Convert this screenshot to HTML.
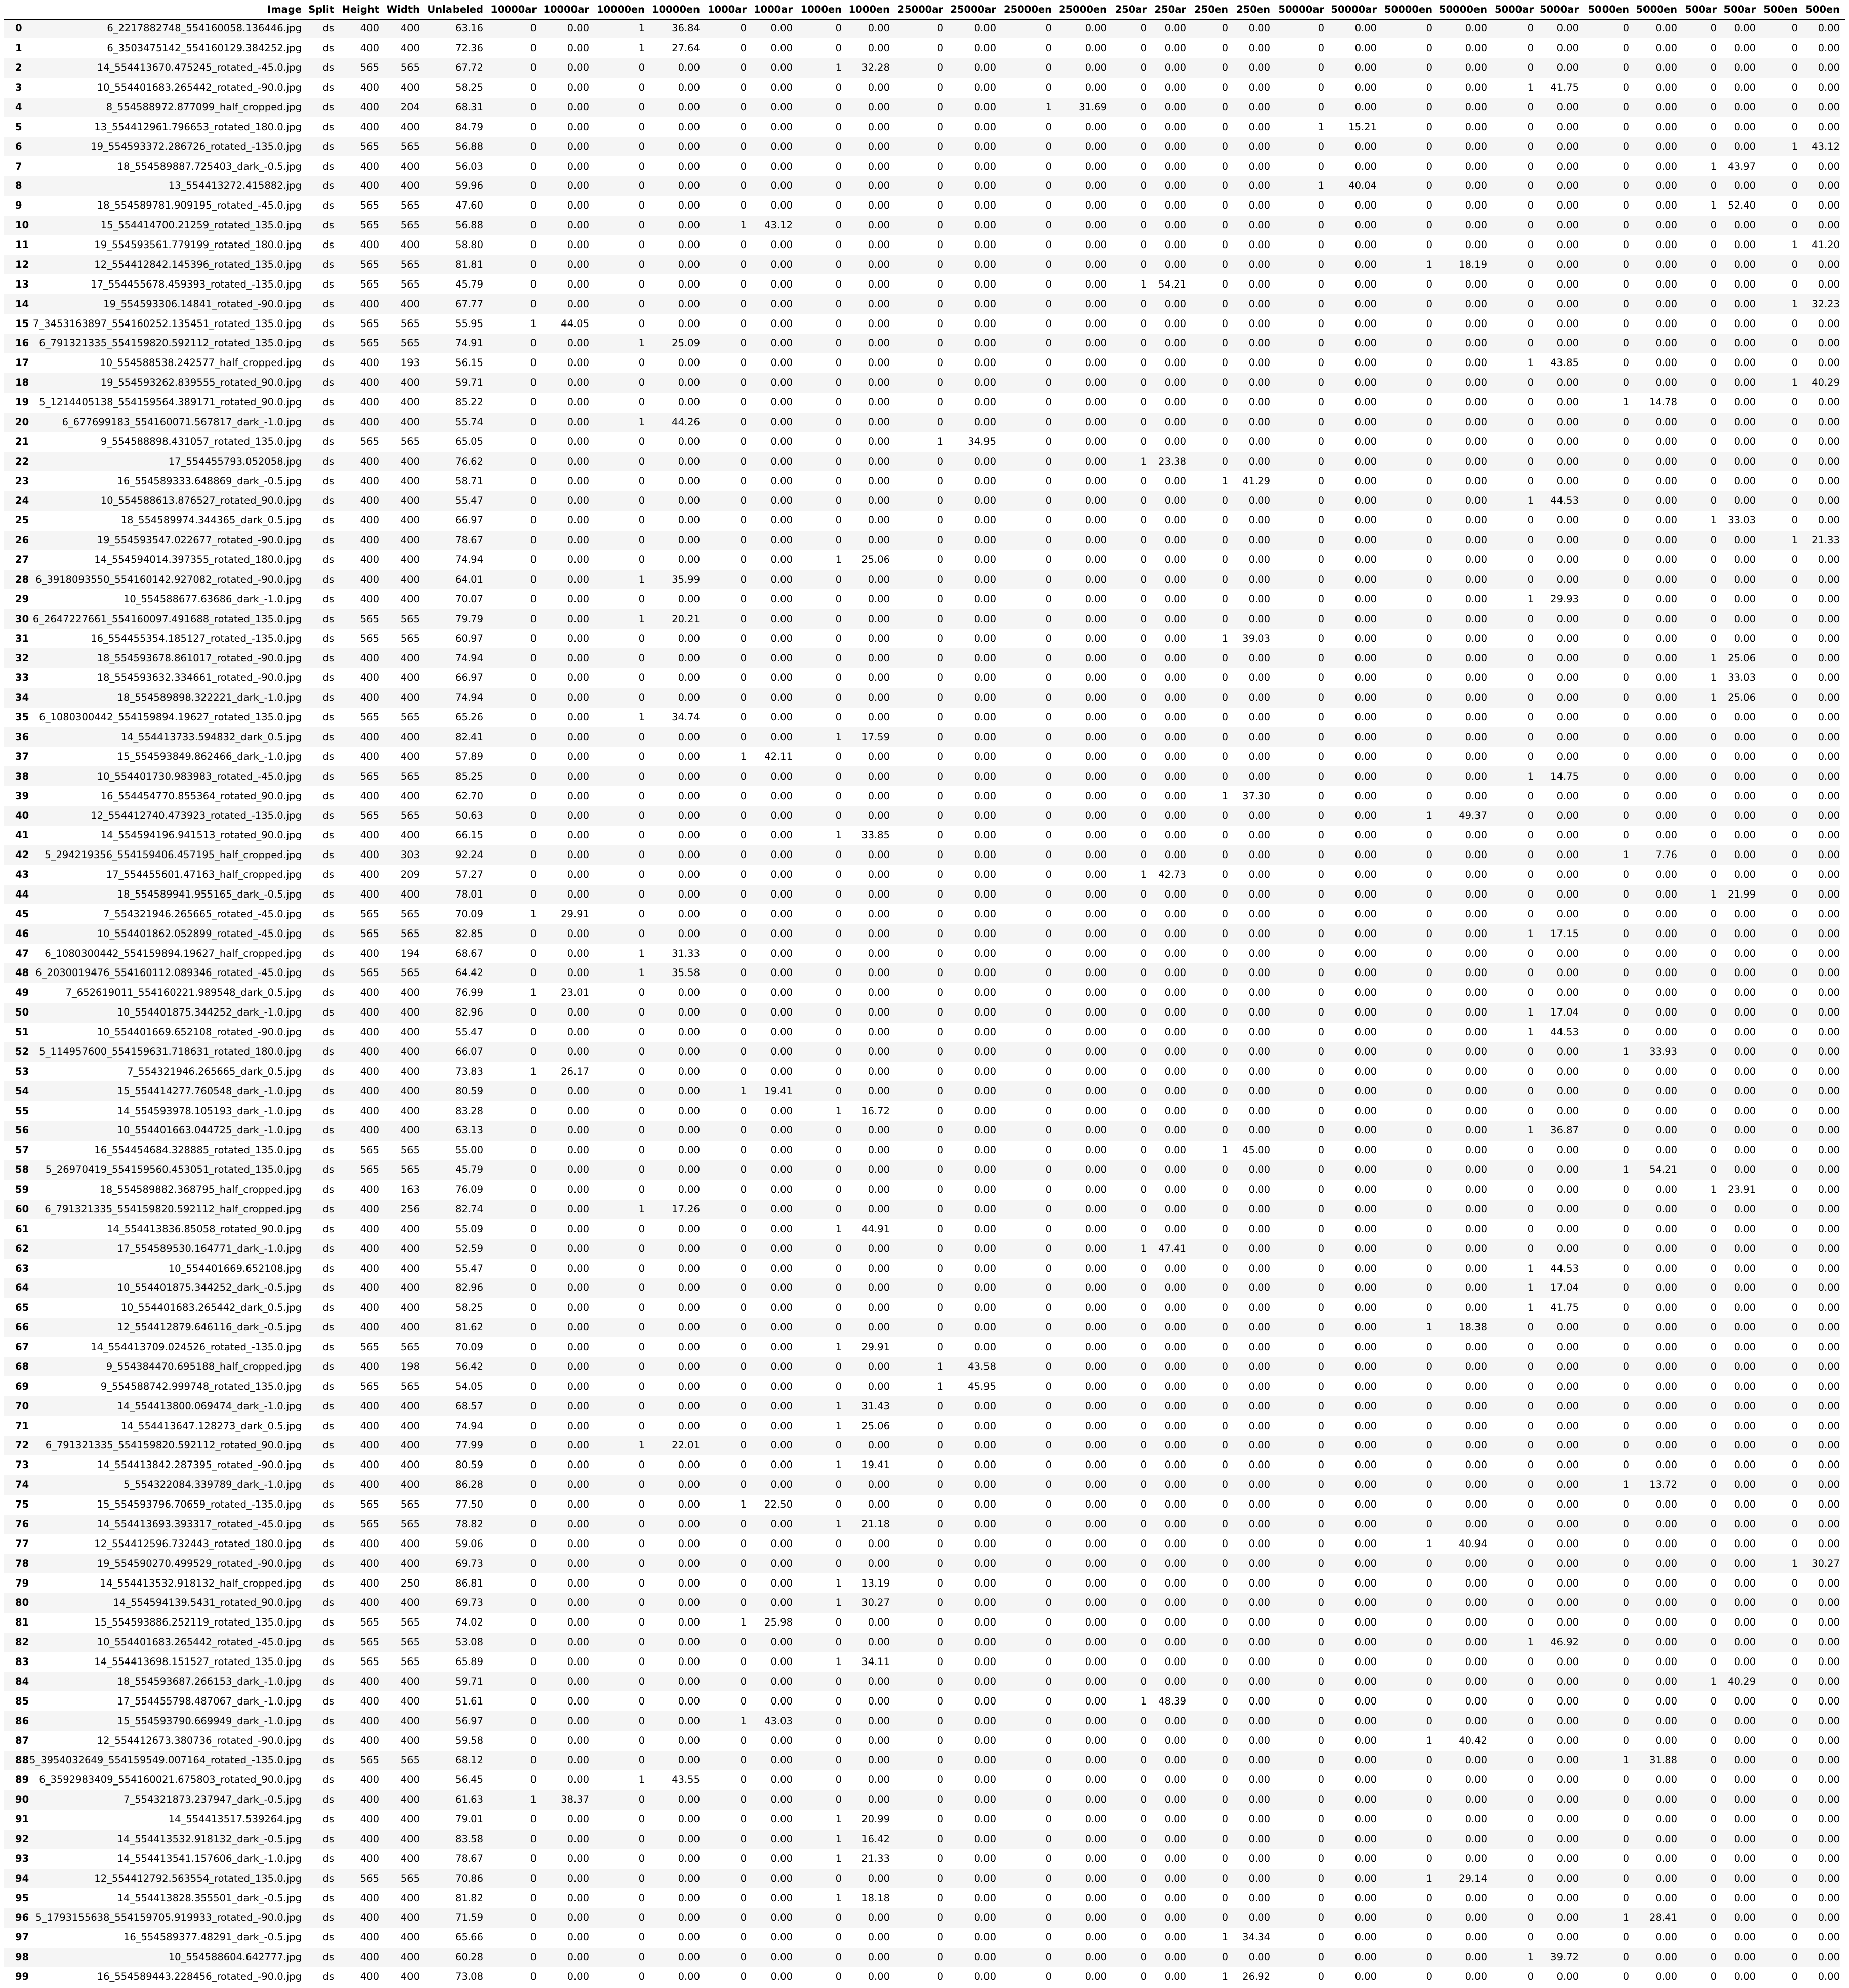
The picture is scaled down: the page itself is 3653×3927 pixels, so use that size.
<!DOCTYPE html>
<html><head><meta charset="utf-8"><style>
html,body{margin:0;padding:0;background:#fff;width:3653px;height:3927px;overflow:hidden}
table{position:absolute;left:8px;top:0;border-collapse:collapse;table-layout:fixed;width:3627px;font-family:"DejaVu Sans","Liberation Sans",sans-serif;font-size:19.5px;color:#000}
td,th{padding:0;text-align:right;white-space:nowrap;vertical-align:middle;height:38.75px;line-height:20px;overflow:visible}
tbody tr:nth-child(even) td,tbody tr:nth-child(even) th{height:39px}
thead th{height:37px;font-weight:bold}
tbody th{text-align:left;padding-left:22px;font-weight:bold}
tbody tr:nth-child(odd){background:#f5f5f5}
#ln{position:absolute;left:8px;top:37px;width:3637px;height:2px;background:#000}
</style></head><body>
<table>
<colgroup><col style="width:50px"><col style="width:538px"><col style="width:64px"><col style="width:89px"><col style="width:80px"><col style="width:126px"><col style="width:105px"><col style="width:104px"><col style="width:110px"><col style="width:109px"><col style="width:92px"><col style="width:91px"><col style="width:97px"><col style="width:95px"><col style="width:106px"><col style="width:104px"><col style="width:110px"><col style="width:109px"><col style="width:79px"><col style="width:78px"><col style="width:83px"><col style="width:83px"><col style="width:106px"><col style="width:104px"><col style="width:110px"><col style="width:108px"><col style="width:92px"><col style="width:89px"><col style="width:100px"><col style="width:95px"><col style="width:78px"><col style="width:77px"><col style="width:83px"><col style="width:83px"></colgroup>
<thead><tr><th></th><th>Image</th><th>Split</th><th>Height</th><th>Width</th><th>Unlabeled</th><th>10000ar</th><th>10000ar</th><th>10000en</th><th>10000en</th><th>1000ar</th><th>1000ar</th><th>1000en</th><th>1000en</th><th>25000ar</th><th>25000ar</th><th>25000en</th><th>25000en</th><th>250ar</th><th>250ar</th><th>250en</th><th>250en</th><th>50000ar</th><th>50000ar</th><th>50000en</th><th>50000en</th><th>5000ar</th><th>5000ar</th><th>5000en</th><th>5000en</th><th>500ar</th><th>500ar</th><th>500en</th><th>500en</th></tr></thead>
<tbody>
<tr><th>0<td>6_2217882748_554160058.136446.jpg<td>ds<td>400<td>400<td>63.16<td>0<td>0.00<td>1<td>36.84<td>0<td>0.00<td>0<td>0.00<td>0<td>0.00<td>0<td>0.00<td>0<td>0.00<td>0<td>0.00<td>0<td>0.00<td>0<td>0.00<td>0<td>0.00<td>0<td>0.00<td>0<td>0.00<td>0<td>0.00
<tr><th>1<td>6_3503475142_554160129.384252.jpg<td>ds<td>400<td>400<td>72.36<td>0<td>0.00<td>1<td>27.64<td>0<td>0.00<td>0<td>0.00<td>0<td>0.00<td>0<td>0.00<td>0<td>0.00<td>0<td>0.00<td>0<td>0.00<td>0<td>0.00<td>0<td>0.00<td>0<td>0.00<td>0<td>0.00<td>0<td>0.00
<tr><th>2<td>14_554413670.475245_rotated_-45.0.jpg<td>ds<td>565<td>565<td>67.72<td>0<td>0.00<td>0<td>0.00<td>0<td>0.00<td>1<td>32.28<td>0<td>0.00<td>0<td>0.00<td>0<td>0.00<td>0<td>0.00<td>0<td>0.00<td>0<td>0.00<td>0<td>0.00<td>0<td>0.00<td>0<td>0.00<td>0<td>0.00
<tr><th>3<td>10_554401683.265442_rotated_-90.0.jpg<td>ds<td>400<td>400<td>58.25<td>0<td>0.00<td>0<td>0.00<td>0<td>0.00<td>0<td>0.00<td>0<td>0.00<td>0<td>0.00<td>0<td>0.00<td>0<td>0.00<td>0<td>0.00<td>0<td>0.00<td>1<td>41.75<td>0<td>0.00<td>0<td>0.00<td>0<td>0.00
<tr><th>4<td>8_554588972.877099_half_cropped.jpg<td>ds<td>400<td>204<td>68.31<td>0<td>0.00<td>0<td>0.00<td>0<td>0.00<td>0<td>0.00<td>0<td>0.00<td>1<td>31.69<td>0<td>0.00<td>0<td>0.00<td>0<td>0.00<td>0<td>0.00<td>0<td>0.00<td>0<td>0.00<td>0<td>0.00<td>0<td>0.00
<tr><th>5<td>13_554412961.796653_rotated_180.0.jpg<td>ds<td>400<td>400<td>84.79<td>0<td>0.00<td>0<td>0.00<td>0<td>0.00<td>0<td>0.00<td>0<td>0.00<td>0<td>0.00<td>0<td>0.00<td>0<td>0.00<td>1<td>15.21<td>0<td>0.00<td>0<td>0.00<td>0<td>0.00<td>0<td>0.00<td>0<td>0.00
<tr><th>6<td>19_554593372.286726_rotated_-135.0.jpg<td>ds<td>565<td>565<td>56.88<td>0<td>0.00<td>0<td>0.00<td>0<td>0.00<td>0<td>0.00<td>0<td>0.00<td>0<td>0.00<td>0<td>0.00<td>0<td>0.00<td>0<td>0.00<td>0<td>0.00<td>0<td>0.00<td>0<td>0.00<td>0<td>0.00<td>1<td>43.12
<tr><th>7<td>18_554589887.725403_dark_-0.5.jpg<td>ds<td>400<td>400<td>56.03<td>0<td>0.00<td>0<td>0.00<td>0<td>0.00<td>0<td>0.00<td>0<td>0.00<td>0<td>0.00<td>0<td>0.00<td>0<td>0.00<td>0<td>0.00<td>0<td>0.00<td>0<td>0.00<td>0<td>0.00<td>1<td>43.97<td>0<td>0.00
<tr><th>8<td>13_554413272.415882.jpg<td>ds<td>400<td>400<td>59.96<td>0<td>0.00<td>0<td>0.00<td>0<td>0.00<td>0<td>0.00<td>0<td>0.00<td>0<td>0.00<td>0<td>0.00<td>0<td>0.00<td>1<td>40.04<td>0<td>0.00<td>0<td>0.00<td>0<td>0.00<td>0<td>0.00<td>0<td>0.00
<tr><th>9<td>18_554589781.909195_rotated_-45.0.jpg<td>ds<td>565<td>565<td>47.60<td>0<td>0.00<td>0<td>0.00<td>0<td>0.00<td>0<td>0.00<td>0<td>0.00<td>0<td>0.00<td>0<td>0.00<td>0<td>0.00<td>0<td>0.00<td>0<td>0.00<td>0<td>0.00<td>0<td>0.00<td>1<td>52.40<td>0<td>0.00
<tr><th>10<td>15_554414700.21259_rotated_135.0.jpg<td>ds<td>565<td>565<td>56.88<td>0<td>0.00<td>0<td>0.00<td>1<td>43.12<td>0<td>0.00<td>0<td>0.00<td>0<td>0.00<td>0<td>0.00<td>0<td>0.00<td>0<td>0.00<td>0<td>0.00<td>0<td>0.00<td>0<td>0.00<td>0<td>0.00<td>0<td>0.00
<tr><th>11<td>19_554593561.779199_rotated_180.0.jpg<td>ds<td>400<td>400<td>58.80<td>0<td>0.00<td>0<td>0.00<td>0<td>0.00<td>0<td>0.00<td>0<td>0.00<td>0<td>0.00<td>0<td>0.00<td>0<td>0.00<td>0<td>0.00<td>0<td>0.00<td>0<td>0.00<td>0<td>0.00<td>0<td>0.00<td>1<td>41.20
<tr><th>12<td>12_554412842.145396_rotated_135.0.jpg<td>ds<td>565<td>565<td>81.81<td>0<td>0.00<td>0<td>0.00<td>0<td>0.00<td>0<td>0.00<td>0<td>0.00<td>0<td>0.00<td>0<td>0.00<td>0<td>0.00<td>0<td>0.00<td>1<td>18.19<td>0<td>0.00<td>0<td>0.00<td>0<td>0.00<td>0<td>0.00
<tr><th>13<td>17_554455678.459393_rotated_-135.0.jpg<td>ds<td>565<td>565<td>45.79<td>0<td>0.00<td>0<td>0.00<td>0<td>0.00<td>0<td>0.00<td>0<td>0.00<td>0<td>0.00<td>1<td>54.21<td>0<td>0.00<td>0<td>0.00<td>0<td>0.00<td>0<td>0.00<td>0<td>0.00<td>0<td>0.00<td>0<td>0.00
<tr><th>14<td>19_554593306.14841_rotated_-90.0.jpg<td>ds<td>400<td>400<td>67.77<td>0<td>0.00<td>0<td>0.00<td>0<td>0.00<td>0<td>0.00<td>0<td>0.00<td>0<td>0.00<td>0<td>0.00<td>0<td>0.00<td>0<td>0.00<td>0<td>0.00<td>0<td>0.00<td>0<td>0.00<td>0<td>0.00<td>1<td>32.23
<tr><th>15<td>7_3453163897_554160252.135451_rotated_135.0.jpg<td>ds<td>565<td>565<td>55.95<td>1<td>44.05<td>0<td>0.00<td>0<td>0.00<td>0<td>0.00<td>0<td>0.00<td>0<td>0.00<td>0<td>0.00<td>0<td>0.00<td>0<td>0.00<td>0<td>0.00<td>0<td>0.00<td>0<td>0.00<td>0<td>0.00<td>0<td>0.00
<tr><th>16<td>6_791321335_554159820.592112_rotated_135.0.jpg<td>ds<td>565<td>565<td>74.91<td>0<td>0.00<td>1<td>25.09<td>0<td>0.00<td>0<td>0.00<td>0<td>0.00<td>0<td>0.00<td>0<td>0.00<td>0<td>0.00<td>0<td>0.00<td>0<td>0.00<td>0<td>0.00<td>0<td>0.00<td>0<td>0.00<td>0<td>0.00
<tr><th>17<td>10_554588538.242577_half_cropped.jpg<td>ds<td>400<td>193<td>56.15<td>0<td>0.00<td>0<td>0.00<td>0<td>0.00<td>0<td>0.00<td>0<td>0.00<td>0<td>0.00<td>0<td>0.00<td>0<td>0.00<td>0<td>0.00<td>0<td>0.00<td>1<td>43.85<td>0<td>0.00<td>0<td>0.00<td>0<td>0.00
<tr><th>18<td>19_554593262.839555_rotated_90.0.jpg<td>ds<td>400<td>400<td>59.71<td>0<td>0.00<td>0<td>0.00<td>0<td>0.00<td>0<td>0.00<td>0<td>0.00<td>0<td>0.00<td>0<td>0.00<td>0<td>0.00<td>0<td>0.00<td>0<td>0.00<td>0<td>0.00<td>0<td>0.00<td>0<td>0.00<td>1<td>40.29
<tr><th>19<td>5_1214405138_554159564.389171_rotated_90.0.jpg<td>ds<td>400<td>400<td>85.22<td>0<td>0.00<td>0<td>0.00<td>0<td>0.00<td>0<td>0.00<td>0<td>0.00<td>0<td>0.00<td>0<td>0.00<td>0<td>0.00<td>0<td>0.00<td>0<td>0.00<td>0<td>0.00<td>1<td>14.78<td>0<td>0.00<td>0<td>0.00
<tr><th>20<td>6_677699183_554160071.567817_dark_-1.0.jpg<td>ds<td>400<td>400<td>55.74<td>0<td>0.00<td>1<td>44.26<td>0<td>0.00<td>0<td>0.00<td>0<td>0.00<td>0<td>0.00<td>0<td>0.00<td>0<td>0.00<td>0<td>0.00<td>0<td>0.00<td>0<td>0.00<td>0<td>0.00<td>0<td>0.00<td>0<td>0.00
<tr><th>21<td>9_554588898.431057_rotated_135.0.jpg<td>ds<td>565<td>565<td>65.05<td>0<td>0.00<td>0<td>0.00<td>0<td>0.00<td>0<td>0.00<td>1<td>34.95<td>0<td>0.00<td>0<td>0.00<td>0<td>0.00<td>0<td>0.00<td>0<td>0.00<td>0<td>0.00<td>0<td>0.00<td>0<td>0.00<td>0<td>0.00
<tr><th>22<td>17_554455793.052058.jpg<td>ds<td>400<td>400<td>76.62<td>0<td>0.00<td>0<td>0.00<td>0<td>0.00<td>0<td>0.00<td>0<td>0.00<td>0<td>0.00<td>1<td>23.38<td>0<td>0.00<td>0<td>0.00<td>0<td>0.00<td>0<td>0.00<td>0<td>0.00<td>0<td>0.00<td>0<td>0.00
<tr><th>23<td>16_554589333.648869_dark_-0.5.jpg<td>ds<td>400<td>400<td>58.71<td>0<td>0.00<td>0<td>0.00<td>0<td>0.00<td>0<td>0.00<td>0<td>0.00<td>0<td>0.00<td>0<td>0.00<td>1<td>41.29<td>0<td>0.00<td>0<td>0.00<td>0<td>0.00<td>0<td>0.00<td>0<td>0.00<td>0<td>0.00
<tr><th>24<td>10_554588613.876527_rotated_90.0.jpg<td>ds<td>400<td>400<td>55.47<td>0<td>0.00<td>0<td>0.00<td>0<td>0.00<td>0<td>0.00<td>0<td>0.00<td>0<td>0.00<td>0<td>0.00<td>0<td>0.00<td>0<td>0.00<td>0<td>0.00<td>1<td>44.53<td>0<td>0.00<td>0<td>0.00<td>0<td>0.00
<tr><th>25<td>18_554589974.344365_dark_0.5.jpg<td>ds<td>400<td>400<td>66.97<td>0<td>0.00<td>0<td>0.00<td>0<td>0.00<td>0<td>0.00<td>0<td>0.00<td>0<td>0.00<td>0<td>0.00<td>0<td>0.00<td>0<td>0.00<td>0<td>0.00<td>0<td>0.00<td>0<td>0.00<td>1<td>33.03<td>0<td>0.00
<tr><th>26<td>19_554593547.022677_rotated_-90.0.jpg<td>ds<td>400<td>400<td>78.67<td>0<td>0.00<td>0<td>0.00<td>0<td>0.00<td>0<td>0.00<td>0<td>0.00<td>0<td>0.00<td>0<td>0.00<td>0<td>0.00<td>0<td>0.00<td>0<td>0.00<td>0<td>0.00<td>0<td>0.00<td>0<td>0.00<td>1<td>21.33
<tr><th>27<td>14_554594014.397355_rotated_180.0.jpg<td>ds<td>400<td>400<td>74.94<td>0<td>0.00<td>0<td>0.00<td>0<td>0.00<td>1<td>25.06<td>0<td>0.00<td>0<td>0.00<td>0<td>0.00<td>0<td>0.00<td>0<td>0.00<td>0<td>0.00<td>0<td>0.00<td>0<td>0.00<td>0<td>0.00<td>0<td>0.00
<tr><th>28<td>6_3918093550_554160142.927082_rotated_-90.0.jpg<td>ds<td>400<td>400<td>64.01<td>0<td>0.00<td>1<td>35.99<td>0<td>0.00<td>0<td>0.00<td>0<td>0.00<td>0<td>0.00<td>0<td>0.00<td>0<td>0.00<td>0<td>0.00<td>0<td>0.00<td>0<td>0.00<td>0<td>0.00<td>0<td>0.00<td>0<td>0.00
<tr><th>29<td>10_554588677.63686_dark_-1.0.jpg<td>ds<td>400<td>400<td>70.07<td>0<td>0.00<td>0<td>0.00<td>0<td>0.00<td>0<td>0.00<td>0<td>0.00<td>0<td>0.00<td>0<td>0.00<td>0<td>0.00<td>0<td>0.00<td>0<td>0.00<td>1<td>29.93<td>0<td>0.00<td>0<td>0.00<td>0<td>0.00
<tr><th>30<td>6_2647227661_554160097.491688_rotated_135.0.jpg<td>ds<td>565<td>565<td>79.79<td>0<td>0.00<td>1<td>20.21<td>0<td>0.00<td>0<td>0.00<td>0<td>0.00<td>0<td>0.00<td>0<td>0.00<td>0<td>0.00<td>0<td>0.00<td>0<td>0.00<td>0<td>0.00<td>0<td>0.00<td>0<td>0.00<td>0<td>0.00
<tr><th>31<td>16_554455354.185127_rotated_-135.0.jpg<td>ds<td>565<td>565<td>60.97<td>0<td>0.00<td>0<td>0.00<td>0<td>0.00<td>0<td>0.00<td>0<td>0.00<td>0<td>0.00<td>0<td>0.00<td>1<td>39.03<td>0<td>0.00<td>0<td>0.00<td>0<td>0.00<td>0<td>0.00<td>0<td>0.00<td>0<td>0.00
<tr><th>32<td>18_554593678.861017_rotated_-90.0.jpg<td>ds<td>400<td>400<td>74.94<td>0<td>0.00<td>0<td>0.00<td>0<td>0.00<td>0<td>0.00<td>0<td>0.00<td>0<td>0.00<td>0<td>0.00<td>0<td>0.00<td>0<td>0.00<td>0<td>0.00<td>0<td>0.00<td>0<td>0.00<td>1<td>25.06<td>0<td>0.00
<tr><th>33<td>18_554593632.334661_rotated_-90.0.jpg<td>ds<td>400<td>400<td>66.97<td>0<td>0.00<td>0<td>0.00<td>0<td>0.00<td>0<td>0.00<td>0<td>0.00<td>0<td>0.00<td>0<td>0.00<td>0<td>0.00<td>0<td>0.00<td>0<td>0.00<td>0<td>0.00<td>0<td>0.00<td>1<td>33.03<td>0<td>0.00
<tr><th>34<td>18_554589898.322221_dark_-1.0.jpg<td>ds<td>400<td>400<td>74.94<td>0<td>0.00<td>0<td>0.00<td>0<td>0.00<td>0<td>0.00<td>0<td>0.00<td>0<td>0.00<td>0<td>0.00<td>0<td>0.00<td>0<td>0.00<td>0<td>0.00<td>0<td>0.00<td>0<td>0.00<td>1<td>25.06<td>0<td>0.00
<tr><th>35<td>6_1080300442_554159894.19627_rotated_135.0.jpg<td>ds<td>565<td>565<td>65.26<td>0<td>0.00<td>1<td>34.74<td>0<td>0.00<td>0<td>0.00<td>0<td>0.00<td>0<td>0.00<td>0<td>0.00<td>0<td>0.00<td>0<td>0.00<td>0<td>0.00<td>0<td>0.00<td>0<td>0.00<td>0<td>0.00<td>0<td>0.00
<tr><th>36<td>14_554413733.594832_dark_0.5.jpg<td>ds<td>400<td>400<td>82.41<td>0<td>0.00<td>0<td>0.00<td>0<td>0.00<td>1<td>17.59<td>0<td>0.00<td>0<td>0.00<td>0<td>0.00<td>0<td>0.00<td>0<td>0.00<td>0<td>0.00<td>0<td>0.00<td>0<td>0.00<td>0<td>0.00<td>0<td>0.00
<tr><th>37<td>15_554593849.862466_dark_-1.0.jpg<td>ds<td>400<td>400<td>57.89<td>0<td>0.00<td>0<td>0.00<td>1<td>42.11<td>0<td>0.00<td>0<td>0.00<td>0<td>0.00<td>0<td>0.00<td>0<td>0.00<td>0<td>0.00<td>0<td>0.00<td>0<td>0.00<td>0<td>0.00<td>0<td>0.00<td>0<td>0.00
<tr><th>38<td>10_554401730.983983_rotated_-45.0.jpg<td>ds<td>565<td>565<td>85.25<td>0<td>0.00<td>0<td>0.00<td>0<td>0.00<td>0<td>0.00<td>0<td>0.00<td>0<td>0.00<td>0<td>0.00<td>0<td>0.00<td>0<td>0.00<td>0<td>0.00<td>1<td>14.75<td>0<td>0.00<td>0<td>0.00<td>0<td>0.00
<tr><th>39<td>16_554454770.855364_rotated_90.0.jpg<td>ds<td>400<td>400<td>62.70<td>0<td>0.00<td>0<td>0.00<td>0<td>0.00<td>0<td>0.00<td>0<td>0.00<td>0<td>0.00<td>0<td>0.00<td>1<td>37.30<td>0<td>0.00<td>0<td>0.00<td>0<td>0.00<td>0<td>0.00<td>0<td>0.00<td>0<td>0.00
<tr><th>40<td>12_554412740.473923_rotated_-135.0.jpg<td>ds<td>565<td>565<td>50.63<td>0<td>0.00<td>0<td>0.00<td>0<td>0.00<td>0<td>0.00<td>0<td>0.00<td>0<td>0.00<td>0<td>0.00<td>0<td>0.00<td>0<td>0.00<td>1<td>49.37<td>0<td>0.00<td>0<td>0.00<td>0<td>0.00<td>0<td>0.00
<tr><th>41<td>14_554594196.941513_rotated_90.0.jpg<td>ds<td>400<td>400<td>66.15<td>0<td>0.00<td>0<td>0.00<td>0<td>0.00<td>1<td>33.85<td>0<td>0.00<td>0<td>0.00<td>0<td>0.00<td>0<td>0.00<td>0<td>0.00<td>0<td>0.00<td>0<td>0.00<td>0<td>0.00<td>0<td>0.00<td>0<td>0.00
<tr><th>42<td>5_294219356_554159406.457195_half_cropped.jpg<td>ds<td>400<td>303<td>92.24<td>0<td>0.00<td>0<td>0.00<td>0<td>0.00<td>0<td>0.00<td>0<td>0.00<td>0<td>0.00<td>0<td>0.00<td>0<td>0.00<td>0<td>0.00<td>0<td>0.00<td>0<td>0.00<td>1<td>7.76<td>0<td>0.00<td>0<td>0.00
<tr><th>43<td>17_554455601.47163_half_cropped.jpg<td>ds<td>400<td>209<td>57.27<td>0<td>0.00<td>0<td>0.00<td>0<td>0.00<td>0<td>0.00<td>0<td>0.00<td>0<td>0.00<td>1<td>42.73<td>0<td>0.00<td>0<td>0.00<td>0<td>0.00<td>0<td>0.00<td>0<td>0.00<td>0<td>0.00<td>0<td>0.00
<tr><th>44<td>18_554589941.955165_dark_-0.5.jpg<td>ds<td>400<td>400<td>78.01<td>0<td>0.00<td>0<td>0.00<td>0<td>0.00<td>0<td>0.00<td>0<td>0.00<td>0<td>0.00<td>0<td>0.00<td>0<td>0.00<td>0<td>0.00<td>0<td>0.00<td>0<td>0.00<td>0<td>0.00<td>1<td>21.99<td>0<td>0.00
<tr><th>45<td>7_554321946.265665_rotated_-45.0.jpg<td>ds<td>565<td>565<td>70.09<td>1<td>29.91<td>0<td>0.00<td>0<td>0.00<td>0<td>0.00<td>0<td>0.00<td>0<td>0.00<td>0<td>0.00<td>0<td>0.00<td>0<td>0.00<td>0<td>0.00<td>0<td>0.00<td>0<td>0.00<td>0<td>0.00<td>0<td>0.00
<tr><th>46<td>10_554401862.052899_rotated_-45.0.jpg<td>ds<td>565<td>565<td>82.85<td>0<td>0.00<td>0<td>0.00<td>0<td>0.00<td>0<td>0.00<td>0<td>0.00<td>0<td>0.00<td>0<td>0.00<td>0<td>0.00<td>0<td>0.00<td>0<td>0.00<td>1<td>17.15<td>0<td>0.00<td>0<td>0.00<td>0<td>0.00
<tr><th>47<td>6_1080300442_554159894.19627_half_cropped.jpg<td>ds<td>400<td>194<td>68.67<td>0<td>0.00<td>1<td>31.33<td>0<td>0.00<td>0<td>0.00<td>0<td>0.00<td>0<td>0.00<td>0<td>0.00<td>0<td>0.00<td>0<td>0.00<td>0<td>0.00<td>0<td>0.00<td>0<td>0.00<td>0<td>0.00<td>0<td>0.00
<tr><th>48<td>6_2030019476_554160112.089346_rotated_-45.0.jpg<td>ds<td>565<td>565<td>64.42<td>0<td>0.00<td>1<td>35.58<td>0<td>0.00<td>0<td>0.00<td>0<td>0.00<td>0<td>0.00<td>0<td>0.00<td>0<td>0.00<td>0<td>0.00<td>0<td>0.00<td>0<td>0.00<td>0<td>0.00<td>0<td>0.00<td>0<td>0.00
<tr><th>49<td>7_652619011_554160221.989548_dark_0.5.jpg<td>ds<td>400<td>400<td>76.99<td>1<td>23.01<td>0<td>0.00<td>0<td>0.00<td>0<td>0.00<td>0<td>0.00<td>0<td>0.00<td>0<td>0.00<td>0<td>0.00<td>0<td>0.00<td>0<td>0.00<td>0<td>0.00<td>0<td>0.00<td>0<td>0.00<td>0<td>0.00
<tr><th>50<td>10_554401875.344252_dark_-1.0.jpg<td>ds<td>400<td>400<td>82.96<td>0<td>0.00<td>0<td>0.00<td>0<td>0.00<td>0<td>0.00<td>0<td>0.00<td>0<td>0.00<td>0<td>0.00<td>0<td>0.00<td>0<td>0.00<td>0<td>0.00<td>1<td>17.04<td>0<td>0.00<td>0<td>0.00<td>0<td>0.00
<tr><th>51<td>10_554401669.652108_rotated_-90.0.jpg<td>ds<td>400<td>400<td>55.47<td>0<td>0.00<td>0<td>0.00<td>0<td>0.00<td>0<td>0.00<td>0<td>0.00<td>0<td>0.00<td>0<td>0.00<td>0<td>0.00<td>0<td>0.00<td>0<td>0.00<td>1<td>44.53<td>0<td>0.00<td>0<td>0.00<td>0<td>0.00
<tr><th>52<td>5_114957600_554159631.718631_rotated_180.0.jpg<td>ds<td>400<td>400<td>66.07<td>0<td>0.00<td>0<td>0.00<td>0<td>0.00<td>0<td>0.00<td>0<td>0.00<td>0<td>0.00<td>0<td>0.00<td>0<td>0.00<td>0<td>0.00<td>0<td>0.00<td>0<td>0.00<td>1<td>33.93<td>0<td>0.00<td>0<td>0.00
<tr><th>53<td>7_554321946.265665_dark_0.5.jpg<td>ds<td>400<td>400<td>73.83<td>1<td>26.17<td>0<td>0.00<td>0<td>0.00<td>0<td>0.00<td>0<td>0.00<td>0<td>0.00<td>0<td>0.00<td>0<td>0.00<td>0<td>0.00<td>0<td>0.00<td>0<td>0.00<td>0<td>0.00<td>0<td>0.00<td>0<td>0.00
<tr><th>54<td>15_554414277.760548_dark_-1.0.jpg<td>ds<td>400<td>400<td>80.59<td>0<td>0.00<td>0<td>0.00<td>1<td>19.41<td>0<td>0.00<td>0<td>0.00<td>0<td>0.00<td>0<td>0.00<td>0<td>0.00<td>0<td>0.00<td>0<td>0.00<td>0<td>0.00<td>0<td>0.00<td>0<td>0.00<td>0<td>0.00
<tr><th>55<td>14_554593978.105193_dark_-1.0.jpg<td>ds<td>400<td>400<td>83.28<td>0<td>0.00<td>0<td>0.00<td>0<td>0.00<td>1<td>16.72<td>0<td>0.00<td>0<td>0.00<td>0<td>0.00<td>0<td>0.00<td>0<td>0.00<td>0<td>0.00<td>0<td>0.00<td>0<td>0.00<td>0<td>0.00<td>0<td>0.00
<tr><th>56<td>10_554401663.044725_dark_-1.0.jpg<td>ds<td>400<td>400<td>63.13<td>0<td>0.00<td>0<td>0.00<td>0<td>0.00<td>0<td>0.00<td>0<td>0.00<td>0<td>0.00<td>0<td>0.00<td>0<td>0.00<td>0<td>0.00<td>0<td>0.00<td>1<td>36.87<td>0<td>0.00<td>0<td>0.00<td>0<td>0.00
<tr><th>57<td>16_554454684.328885_rotated_135.0.jpg<td>ds<td>565<td>565<td>55.00<td>0<td>0.00<td>0<td>0.00<td>0<td>0.00<td>0<td>0.00<td>0<td>0.00<td>0<td>0.00<td>0<td>0.00<td>1<td>45.00<td>0<td>0.00<td>0<td>0.00<td>0<td>0.00<td>0<td>0.00<td>0<td>0.00<td>0<td>0.00
<tr><th>58<td>5_26970419_554159560.453051_rotated_135.0.jpg<td>ds<td>565<td>565<td>45.79<td>0<td>0.00<td>0<td>0.00<td>0<td>0.00<td>0<td>0.00<td>0<td>0.00<td>0<td>0.00<td>0<td>0.00<td>0<td>0.00<td>0<td>0.00<td>0<td>0.00<td>0<td>0.00<td>1<td>54.21<td>0<td>0.00<td>0<td>0.00
<tr><th>59<td>18_554589882.368795_half_cropped.jpg<td>ds<td>400<td>163<td>76.09<td>0<td>0.00<td>0<td>0.00<td>0<td>0.00<td>0<td>0.00<td>0<td>0.00<td>0<td>0.00<td>0<td>0.00<td>0<td>0.00<td>0<td>0.00<td>0<td>0.00<td>0<td>0.00<td>0<td>0.00<td>1<td>23.91<td>0<td>0.00
<tr><th>60<td>6_791321335_554159820.592112_half_cropped.jpg<td>ds<td>400<td>256<td>82.74<td>0<td>0.00<td>1<td>17.26<td>0<td>0.00<td>0<td>0.00<td>0<td>0.00<td>0<td>0.00<td>0<td>0.00<td>0<td>0.00<td>0<td>0.00<td>0<td>0.00<td>0<td>0.00<td>0<td>0.00<td>0<td>0.00<td>0<td>0.00
<tr><th>61<td>14_554413836.85058_rotated_90.0.jpg<td>ds<td>400<td>400<td>55.09<td>0<td>0.00<td>0<td>0.00<td>0<td>0.00<td>1<td>44.91<td>0<td>0.00<td>0<td>0.00<td>0<td>0.00<td>0<td>0.00<td>0<td>0.00<td>0<td>0.00<td>0<td>0.00<td>0<td>0.00<td>0<td>0.00<td>0<td>0.00
<tr><th>62<td>17_554589530.164771_dark_-1.0.jpg<td>ds<td>400<td>400<td>52.59<td>0<td>0.00<td>0<td>0.00<td>0<td>0.00<td>0<td>0.00<td>0<td>0.00<td>0<td>0.00<td>1<td>47.41<td>0<td>0.00<td>0<td>0.00<td>0<td>0.00<td>0<td>0.00<td>0<td>0.00<td>0<td>0.00<td>0<td>0.00
<tr><th>63<td>10_554401669.652108.jpg<td>ds<td>400<td>400<td>55.47<td>0<td>0.00<td>0<td>0.00<td>0<td>0.00<td>0<td>0.00<td>0<td>0.00<td>0<td>0.00<td>0<td>0.00<td>0<td>0.00<td>0<td>0.00<td>0<td>0.00<td>1<td>44.53<td>0<td>0.00<td>0<td>0.00<td>0<td>0.00
<tr><th>64<td>10_554401875.344252_dark_-0.5.jpg<td>ds<td>400<td>400<td>82.96<td>0<td>0.00<td>0<td>0.00<td>0<td>0.00<td>0<td>0.00<td>0<td>0.00<td>0<td>0.00<td>0<td>0.00<td>0<td>0.00<td>0<td>0.00<td>0<td>0.00<td>1<td>17.04<td>0<td>0.00<td>0<td>0.00<td>0<td>0.00
<tr><th>65<td>10_554401683.265442_dark_0.5.jpg<td>ds<td>400<td>400<td>58.25<td>0<td>0.00<td>0<td>0.00<td>0<td>0.00<td>0<td>0.00<td>0<td>0.00<td>0<td>0.00<td>0<td>0.00<td>0<td>0.00<td>0<td>0.00<td>0<td>0.00<td>1<td>41.75<td>0<td>0.00<td>0<td>0.00<td>0<td>0.00
<tr><th>66<td>12_554412879.646116_dark_-0.5.jpg<td>ds<td>400<td>400<td>81.62<td>0<td>0.00<td>0<td>0.00<td>0<td>0.00<td>0<td>0.00<td>0<td>0.00<td>0<td>0.00<td>0<td>0.00<td>0<td>0.00<td>0<td>0.00<td>1<td>18.38<td>0<td>0.00<td>0<td>0.00<td>0<td>0.00<td>0<td>0.00
<tr><th>67<td>14_554413709.024526_rotated_-135.0.jpg<td>ds<td>565<td>565<td>70.09<td>0<td>0.00<td>0<td>0.00<td>0<td>0.00<td>1<td>29.91<td>0<td>0.00<td>0<td>0.00<td>0<td>0.00<td>0<td>0.00<td>0<td>0.00<td>0<td>0.00<td>0<td>0.00<td>0<td>0.00<td>0<td>0.00<td>0<td>0.00
<tr><th>68<td>9_554384470.695188_half_cropped.jpg<td>ds<td>400<td>198<td>56.42<td>0<td>0.00<td>0<td>0.00<td>0<td>0.00<td>0<td>0.00<td>1<td>43.58<td>0<td>0.00<td>0<td>0.00<td>0<td>0.00<td>0<td>0.00<td>0<td>0.00<td>0<td>0.00<td>0<td>0.00<td>0<td>0.00<td>0<td>0.00
<tr><th>69<td>9_554588742.999748_rotated_135.0.jpg<td>ds<td>565<td>565<td>54.05<td>0<td>0.00<td>0<td>0.00<td>0<td>0.00<td>0<td>0.00<td>1<td>45.95<td>0<td>0.00<td>0<td>0.00<td>0<td>0.00<td>0<td>0.00<td>0<td>0.00<td>0<td>0.00<td>0<td>0.00<td>0<td>0.00<td>0<td>0.00
<tr><th>70<td>14_554413800.069474_dark_-1.0.jpg<td>ds<td>400<td>400<td>68.57<td>0<td>0.00<td>0<td>0.00<td>0<td>0.00<td>1<td>31.43<td>0<td>0.00<td>0<td>0.00<td>0<td>0.00<td>0<td>0.00<td>0<td>0.00<td>0<td>0.00<td>0<td>0.00<td>0<td>0.00<td>0<td>0.00<td>0<td>0.00
<tr><th>71<td>14_554413647.128273_dark_0.5.jpg<td>ds<td>400<td>400<td>74.94<td>0<td>0.00<td>0<td>0.00<td>0<td>0.00<td>1<td>25.06<td>0<td>0.00<td>0<td>0.00<td>0<td>0.00<td>0<td>0.00<td>0<td>0.00<td>0<td>0.00<td>0<td>0.00<td>0<td>0.00<td>0<td>0.00<td>0<td>0.00
<tr><th>72<td>6_791321335_554159820.592112_rotated_90.0.jpg<td>ds<td>400<td>400<td>77.99<td>0<td>0.00<td>1<td>22.01<td>0<td>0.00<td>0<td>0.00<td>0<td>0.00<td>0<td>0.00<td>0<td>0.00<td>0<td>0.00<td>0<td>0.00<td>0<td>0.00<td>0<td>0.00<td>0<td>0.00<td>0<td>0.00<td>0<td>0.00
<tr><th>73<td>14_554413842.287395_rotated_-90.0.jpg<td>ds<td>400<td>400<td>80.59<td>0<td>0.00<td>0<td>0.00<td>0<td>0.00<td>1<td>19.41<td>0<td>0.00<td>0<td>0.00<td>0<td>0.00<td>0<td>0.00<td>0<td>0.00<td>0<td>0.00<td>0<td>0.00<td>0<td>0.00<td>0<td>0.00<td>0<td>0.00
<tr><th>74<td>5_554322084.339789_dark_-1.0.jpg<td>ds<td>400<td>400<td>86.28<td>0<td>0.00<td>0<td>0.00<td>0<td>0.00<td>0<td>0.00<td>0<td>0.00<td>0<td>0.00<td>0<td>0.00<td>0<td>0.00<td>0<td>0.00<td>0<td>0.00<td>0<td>0.00<td>1<td>13.72<td>0<td>0.00<td>0<td>0.00
<tr><th>75<td>15_554593796.70659_rotated_-135.0.jpg<td>ds<td>565<td>565<td>77.50<td>0<td>0.00<td>0<td>0.00<td>1<td>22.50<td>0<td>0.00<td>0<td>0.00<td>0<td>0.00<td>0<td>0.00<td>0<td>0.00<td>0<td>0.00<td>0<td>0.00<td>0<td>0.00<td>0<td>0.00<td>0<td>0.00<td>0<td>0.00
<tr><th>76<td>14_554413693.393317_rotated_-45.0.jpg<td>ds<td>565<td>565<td>78.82<td>0<td>0.00<td>0<td>0.00<td>0<td>0.00<td>1<td>21.18<td>0<td>0.00<td>0<td>0.00<td>0<td>0.00<td>0<td>0.00<td>0<td>0.00<td>0<td>0.00<td>0<td>0.00<td>0<td>0.00<td>0<td>0.00<td>0<td>0.00
<tr><th>77<td>12_554412596.732443_rotated_180.0.jpg<td>ds<td>400<td>400<td>59.06<td>0<td>0.00<td>0<td>0.00<td>0<td>0.00<td>0<td>0.00<td>0<td>0.00<td>0<td>0.00<td>0<td>0.00<td>0<td>0.00<td>0<td>0.00<td>1<td>40.94<td>0<td>0.00<td>0<td>0.00<td>0<td>0.00<td>0<td>0.00
<tr><th>78<td>19_554590270.499529_rotated_-90.0.jpg<td>ds<td>400<td>400<td>69.73<td>0<td>0.00<td>0<td>0.00<td>0<td>0.00<td>0<td>0.00<td>0<td>0.00<td>0<td>0.00<td>0<td>0.00<td>0<td>0.00<td>0<td>0.00<td>0<td>0.00<td>0<td>0.00<td>0<td>0.00<td>0<td>0.00<td>1<td>30.27
<tr><th>79<td>14_554413532.918132_half_cropped.jpg<td>ds<td>400<td>250<td>86.81<td>0<td>0.00<td>0<td>0.00<td>0<td>0.00<td>1<td>13.19<td>0<td>0.00<td>0<td>0.00<td>0<td>0.00<td>0<td>0.00<td>0<td>0.00<td>0<td>0.00<td>0<td>0.00<td>0<td>0.00<td>0<td>0.00<td>0<td>0.00
<tr><th>80<td>14_554594139.5431_rotated_90.0.jpg<td>ds<td>400<td>400<td>69.73<td>0<td>0.00<td>0<td>0.00<td>0<td>0.00<td>1<td>30.27<td>0<td>0.00<td>0<td>0.00<td>0<td>0.00<td>0<td>0.00<td>0<td>0.00<td>0<td>0.00<td>0<td>0.00<td>0<td>0.00<td>0<td>0.00<td>0<td>0.00
<tr><th>81<td>15_554593886.252119_rotated_135.0.jpg<td>ds<td>565<td>565<td>74.02<td>0<td>0.00<td>0<td>0.00<td>1<td>25.98<td>0<td>0.00<td>0<td>0.00<td>0<td>0.00<td>0<td>0.00<td>0<td>0.00<td>0<td>0.00<td>0<td>0.00<td>0<td>0.00<td>0<td>0.00<td>0<td>0.00<td>0<td>0.00
<tr><th>82<td>10_554401683.265442_rotated_-45.0.jpg<td>ds<td>565<td>565<td>53.08<td>0<td>0.00<td>0<td>0.00<td>0<td>0.00<td>0<td>0.00<td>0<td>0.00<td>0<td>0.00<td>0<td>0.00<td>0<td>0.00<td>0<td>0.00<td>0<td>0.00<td>1<td>46.92<td>0<td>0.00<td>0<td>0.00<td>0<td>0.00
<tr><th>83<td>14_554413698.151527_rotated_135.0.jpg<td>ds<td>565<td>565<td>65.89<td>0<td>0.00<td>0<td>0.00<td>0<td>0.00<td>1<td>34.11<td>0<td>0.00<td>0<td>0.00<td>0<td>0.00<td>0<td>0.00<td>0<td>0.00<td>0<td>0.00<td>0<td>0.00<td>0<td>0.00<td>0<td>0.00<td>0<td>0.00
<tr><th>84<td>18_554593687.266153_dark_-1.0.jpg<td>ds<td>400<td>400<td>59.71<td>0<td>0.00<td>0<td>0.00<td>0<td>0.00<td>0<td>0.00<td>0<td>0.00<td>0<td>0.00<td>0<td>0.00<td>0<td>0.00<td>0<td>0.00<td>0<td>0.00<td>0<td>0.00<td>0<td>0.00<td>1<td>40.29<td>0<td>0.00
<tr><th>85<td>17_554455798.487067_dark_-1.0.jpg<td>ds<td>400<td>400<td>51.61<td>0<td>0.00<td>0<td>0.00<td>0<td>0.00<td>0<td>0.00<td>0<td>0.00<td>0<td>0.00<td>1<td>48.39<td>0<td>0.00<td>0<td>0.00<td>0<td>0.00<td>0<td>0.00<td>0<td>0.00<td>0<td>0.00<td>0<td>0.00
<tr><th>86<td>15_554593790.669949_dark_-1.0.jpg<td>ds<td>400<td>400<td>56.97<td>0<td>0.00<td>0<td>0.00<td>1<td>43.03<td>0<td>0.00<td>0<td>0.00<td>0<td>0.00<td>0<td>0.00<td>0<td>0.00<td>0<td>0.00<td>0<td>0.00<td>0<td>0.00<td>0<td>0.00<td>0<td>0.00<td>0<td>0.00
<tr><th>87<td>12_554412673.380736_rotated_-90.0.jpg<td>ds<td>400<td>400<td>59.58<td>0<td>0.00<td>0<td>0.00<td>0<td>0.00<td>0<td>0.00<td>0<td>0.00<td>0<td>0.00<td>0<td>0.00<td>0<td>0.00<td>0<td>0.00<td>1<td>40.42<td>0<td>0.00<td>0<td>0.00<td>0<td>0.00<td>0<td>0.00
<tr><th>88<td>5_3954032649_554159549.007164_rotated_-135.0.jpg<td>ds<td>565<td>565<td>68.12<td>0<td>0.00<td>0<td>0.00<td>0<td>0.00<td>0<td>0.00<td>0<td>0.00<td>0<td>0.00<td>0<td>0.00<td>0<td>0.00<td>0<td>0.00<td>0<td>0.00<td>0<td>0.00<td>1<td>31.88<td>0<td>0.00<td>0<td>0.00
<tr><th>89<td>6_3592983409_554160021.675803_rotated_90.0.jpg<td>ds<td>400<td>400<td>56.45<td>0<td>0.00<td>1<td>43.55<td>0<td>0.00<td>0<td>0.00<td>0<td>0.00<td>0<td>0.00<td>0<td>0.00<td>0<td>0.00<td>0<td>0.00<td>0<td>0.00<td>0<td>0.00<td>0<td>0.00<td>0<td>0.00<td>0<td>0.00
<tr><th>90<td>7_554321873.237947_dark_-0.5.jpg<td>ds<td>400<td>400<td>61.63<td>1<td>38.37<td>0<td>0.00<td>0<td>0.00<td>0<td>0.00<td>0<td>0.00<td>0<td>0.00<td>0<td>0.00<td>0<td>0.00<td>0<td>0.00<td>0<td>0.00<td>0<td>0.00<td>0<td>0.00<td>0<td>0.00<td>0<td>0.00
<tr><th>91<td>14_554413517.539264.jpg<td>ds<td>400<td>400<td>79.01<td>0<td>0.00<td>0<td>0.00<td>0<td>0.00<td>1<td>20.99<td>0<td>0.00<td>0<td>0.00<td>0<td>0.00<td>0<td>0.00<td>0<td>0.00<td>0<td>0.00<td>0<td>0.00<td>0<td>0.00<td>0<td>0.00<td>0<td>0.00
<tr><th>92<td>14_554413532.918132_dark_-0.5.jpg<td>ds<td>400<td>400<td>83.58<td>0<td>0.00<td>0<td>0.00<td>0<td>0.00<td>1<td>16.42<td>0<td>0.00<td>0<td>0.00<td>0<td>0.00<td>0<td>0.00<td>0<td>0.00<td>0<td>0.00<td>0<td>0.00<td>0<td>0.00<td>0<td>0.00<td>0<td>0.00
<tr><th>93<td>14_554413541.157606_dark_-1.0.jpg<td>ds<td>400<td>400<td>78.67<td>0<td>0.00<td>0<td>0.00<td>0<td>0.00<td>1<td>21.33<td>0<td>0.00<td>0<td>0.00<td>0<td>0.00<td>0<td>0.00<td>0<td>0.00<td>0<td>0.00<td>0<td>0.00<td>0<td>0.00<td>0<td>0.00<td>0<td>0.00
<tr><th>94<td>12_554412792.563554_rotated_135.0.jpg<td>ds<td>565<td>565<td>70.86<td>0<td>0.00<td>0<td>0.00<td>0<td>0.00<td>0<td>0.00<td>0<td>0.00<td>0<td>0.00<td>0<td>0.00<td>0<td>0.00<td>0<td>0.00<td>1<td>29.14<td>0<td>0.00<td>0<td>0.00<td>0<td>0.00<td>0<td>0.00
<tr><th>95<td>14_554413828.355501_dark_-0.5.jpg<td>ds<td>400<td>400<td>81.82<td>0<td>0.00<td>0<td>0.00<td>0<td>0.00<td>1<td>18.18<td>0<td>0.00<td>0<td>0.00<td>0<td>0.00<td>0<td>0.00<td>0<td>0.00<td>0<td>0.00<td>0<td>0.00<td>0<td>0.00<td>0<td>0.00<td>0<td>0.00
<tr><th>96<td>5_1793155638_554159705.919933_rotated_-90.0.jpg<td>ds<td>400<td>400<td>71.59<td>0<td>0.00<td>0<td>0.00<td>0<td>0.00<td>0<td>0.00<td>0<td>0.00<td>0<td>0.00<td>0<td>0.00<td>0<td>0.00<td>0<td>0.00<td>0<td>0.00<td>0<td>0.00<td>1<td>28.41<td>0<td>0.00<td>0<td>0.00
<tr><th>97<td>16_554589377.48291_dark_-0.5.jpg<td>ds<td>400<td>400<td>65.66<td>0<td>0.00<td>0<td>0.00<td>0<td>0.00<td>0<td>0.00<td>0<td>0.00<td>0<td>0.00<td>0<td>0.00<td>1<td>34.34<td>0<td>0.00<td>0<td>0.00<td>0<td>0.00<td>0<td>0.00<td>0<td>0.00<td>0<td>0.00
<tr><th>98<td>10_554588604.642777.jpg<td>ds<td>400<td>400<td>60.28<td>0<td>0.00<td>0<td>0.00<td>0<td>0.00<td>0<td>0.00<td>0<td>0.00<td>0<td>0.00<td>0<td>0.00<td>0<td>0.00<td>0<td>0.00<td>0<td>0.00<td>1<td>39.72<td>0<td>0.00<td>0<td>0.00<td>0<td>0.00
<tr><th>99<td>16_554589443.228456_rotated_-90.0.jpg<td>ds<td>400<td>400<td>73.08<td>0<td>0.00<td>0<td>0.00<td>0<td>0.00<td>0<td>0.00<td>0<td>0.00<td>0<td>0.00<td>0<td>0.00<td>1<td>26.92<td>0<td>0.00<td>0<td>0.00<td>0<td>0.00<td>0<td>0.00<td>0<td>0.00<td>0<td>0.00
</tbody></table>
<div id="ln"></div>
</body></html>
